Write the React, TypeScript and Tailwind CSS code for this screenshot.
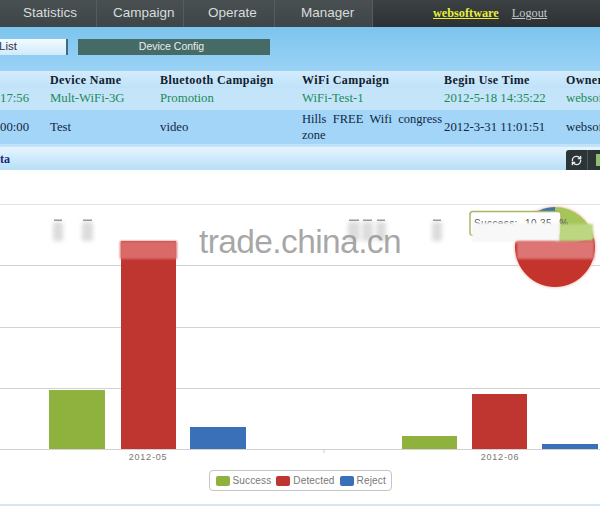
import { RefreshCw } from "lucide-react";

const navItems = [
  { label: "Statistics", width: "w-[97px]", pad: "pl-[23px]" },
  { label: "Campaign", width: "w-[87px]", pad: "pl-[16px]" },
  { label: "Operate", width: "w-[91px]", pad: "pl-[24px]" },
  { label: "Manager", width: "w-[98px]", pad: "pl-[26px]" },
];

const headers = ["", "Device Name", "Bluetooth Campaign", "WiFi Campaign", "Begin Use Time", "Owner"];

const rows = [
  ["17:56", "Mult-WiFi-3G", "Promotion", "WiFi-Test-1", "2012-5-18 14:35:22", "websoftware"],
  ["00:00", "Test", "video", "Hills FREE Wifi congress zone", "2012-3-31 11:01:51", "websoftware"],
];

const gridLines = [34, 95, 157, 218, 279];

const bars = [
  { x: 49, y: 220, w: 56, h: 59, fill: "#8fb23f" },
  { x: 121, y: 71, w: 55, h: 208, fill: "#bf3530" },
  { x: 190, y: 257, w: 56, h: 22, fill: "#3a70b8" },
  { x: 402, y: 266, w: 55, h: 13, fill: "#8fb23f" },
  { x: 472, y: 224, w: 55, h: 55, fill: "#bf3530" },
  { x: 542, y: 274, w: 56, h: 5, fill: "#3a70b8" },
];

const smudges = [
  { x: 53, w: 10 },
  { x: 82, w: 11 },
  { x: 348, w: 12 },
  { x: 362, w: 11 },
  { x: 376, w: 10 },
  { x: 432, w: 10 },
];

const legend = [
  { label: "Success", color: "bg-[#8fb23f]" },
  { label: "Detected", color: "bg-[#bf3530]" },
  { label: "Reject", color: "bg-[#3a70b8]" },
];

function Chart() {
  return (
    <svg width="600" height="294" viewBox="0 0 600 294" className="block">
      <defs>
        <filter id="soft" x="-50%" y="-50%" width="200%" height="200%">
          <feGaussianBlur stdDeviation="2" />
        </filter>
        <filter id="shadow" x="-20%" y="-20%" width="140%" height="140%">
          <feGaussianBlur stdDeviation="1.2" />
        </filter>
      </defs>

      {gridLines.map((y) => (
        <line key={y} x1="0" x2="600" y1={y + 0.5} y2={y + 0.5} stroke={y === 34 ? "#e2e2e2" : "#d2d2d2"} />
      ))}
      <line x1="324" x2="324" y1="279" y2="283" stroke="#ccc" />

      {bars.map((b) => (
        <rect key={b.x} x={b.x} y={b.y} width={b.w} height={b.h} fill={b.fill} />
      ))}
      <rect x="120" y="71" width="57" height="18" fill="#d96a68" filter="url(#shadow)" />

      {/* pie */}
      <circle cx="555" cy="77" r="41" fill="#f5cfc6" filter="url(#shadow)" />
      <path d="M555 77 L555 37 A40 40 0 0 1 594 68 Z" fill="#a6c659" />
      <path d="M555 77 L594 68 A40 40 0 1 1 516 68 L533 44 Z" fill="#c4332c" />
      <path d="M555 77 L533 44 A40 40 0 0 1 555 37 Z" fill="#3f75a8" />

      {/* tooltip */}
      <rect x="470" y="41.5" width="91" height="24" rx="3" fill="#fff" stroke="#a9b56a" strokeWidth="1.5" />
      <text x="474" y="57" fontSize="10" letterSpacing="0.4" wordSpacing="4" fill="#555" fontFamily="Liberation Sans, sans-serif">
        Success: 10.35 %
      </text>

      <rect x="472" y="53" width="88" height="19" fill="#f8f8f8" filter="url(#shadow)" />
      <rect x="560" y="54" width="33" height="17" fill="#bcd682" filter="url(#shadow)" />
      <rect x="517" y="71" width="77" height="18" fill="#dd7474" filter="url(#shadow)" />

      {smudges.map((s) => (
        <g key={s.x}>
          <rect x={s.x} y="52" width={s.w} height="19" fill="#dcdcdc" filter="url(#soft)" />
          <rect x={s.x + 1} y="49.5" width={s.w - 2} height="1.5" fill="#999" />
        </g>
      ))}

      <text x="148" y="290" textAnchor="middle" fontSize="9" letterSpacing="0.8" fill="#777" fontFamily="Liberation Sans, sans-serif">
        2012-05
      </text>
      <text x="500" y="290" textAnchor="middle" fontSize="9" letterSpacing="0.8" fill="#777" fontFamily="Liberation Sans, sans-serif">
        2012-06
      </text>
    </svg>
  );
}

export default function App() {
  return (
    <div className="relative w-[600px] h-[506px] overflow-hidden bg-white font-['Liberation_Serif',serif]">
      <nav className="flex h-[27px] bg-gradient-to-b from-[#3c4143] to-[#2c3133]">
        {navItems.map((item) => (
          <div
            key={item.label}
            className={`${item.width} ${item.pad} flex items-center border-r border-[#565c5e] bg-gradient-to-b from-[#4a5052] to-[#3d4547] font-['Liberation_Sans',sans-serif] text-[13.5px] text-[#d8dcdc]`}
          >
            {item.label}
          </div>
        ))}
        <div className="flex items-center pl-[60px] text-[12.25px]">
          <a className="font-bold text-[#e8ee3a] underline">websoftware</a>
          <a className="ml-[13px] text-[#c6caca] underline">Logout</a>
        </div>
      </nav>

      <div className="h-[120px] bg-gradient-to-b from-[#7cc4ee] via-[#a5d8f8] to-[#c2e3fa] pt-[12px]">
        <div className="flex h-[16px] items-stretch">
          <div className="flex w-[68px] items-center border-r-2 border-[#3f6a80] bg-gradient-to-b from-[#f4fbff] to-[#d0eafb] font-['Liberation_Sans',sans-serif] text-[11.5px] text-[#334]">
            <span className="-ml-[1px]">List</span>
          </div>
          <div className="ml-[10px] flex w-[192px] items-center justify-center bg-[#466b66] pr-[5px] font-['Liberation_Sans',sans-serif] text-[10.5px] text-[#e6eeee]">
            Device Config
          </div>
        </div>

        <div className="mt-[16px] grid grid-cols-[50px_110px_142px_142px_122px_34px] text-[12.75px]">
          {headers.map((h) => (
            <div
              key={h}
              className="flex h-[17px] items-center whitespace-nowrap bg-gradient-to-b from-[#d3ecfc] to-[#bfe2f9] text-[12px] font-bold tracking-[0.4px] text-[#10202e]"
            >
              {h}
            </div>
          ))}
          {rows[0].map((cell) => (
            <div key={cell} className="flex h-[22px] items-center whitespace-nowrap bg-[#c4e4fa] text-[#1e8a5a]">
              {cell}
            </div>
          ))}
          {rows[1].map((cell, i) => (
            <div
              key={cell}
              className={`flex h-[34px] items-center bg-[#a3d5f8] leading-[16px] text-[#10283f] ${i === 3 ? "pr-[2px]" : "whitespace-nowrap"}`}
            >
              {i === 3 ? <span className="block w-full text-justify text-[12.5px]">{cell}</span> : cell}
            </div>
          ))}
        </div>
      </div>

      <div className="flex h-[23px] items-center justify-between bg-gradient-to-b from-[#e6f4fd] to-[#b6dff8]">
        <span className="text-[12px] font-bold text-[#1a2a78]">ta</span>
        <div className="mt-[3px] flex h-[20px] w-[34px] items-center rounded-tl-[3px] bg-[#2b3436]">
          <span className="flex h-full w-[22px] items-center justify-center border-r border-[#4c5557] text-[#e8e8e8]">
            <RefreshCw size={11} strokeWidth={3} />
          </span>
          <span className="ml-[8px] h-[12px] w-[4px] bg-[#8fbf6a]" />
        </div>
      </div>

      <Chart />

      <div className="mt-[6px] flex justify-center">
        <div className="flex h-[21px] w-[183px] items-center gap-[5px] rounded-[4px] border border-[#c4c4c4] pl-[6px] font-['Liberation_Sans',sans-serif] text-[10px] tracking-[0.15px] text-[#777]">
          {legend.map((l) => (
            <span key={l.label} className="flex items-center gap-[3px]">
              <span className={`h-[10px] w-[14px] rounded-[2px] ${l.color}`} />
              {l.label}
            </span>
          ))}
        </div>
      </div>

      <div className="mt-[13px] h-[2px] bg-[#d4e6f4]" />

      <span className="absolute left-[199px] top-[223px] font-['Liberation_Sans',sans-serif] text-[33.5px] leading-[38px] tracking-[-0.6px] text-[#8a8a8a]/75">
        trade.china.cn
      </span>
    </div>
  );
}
